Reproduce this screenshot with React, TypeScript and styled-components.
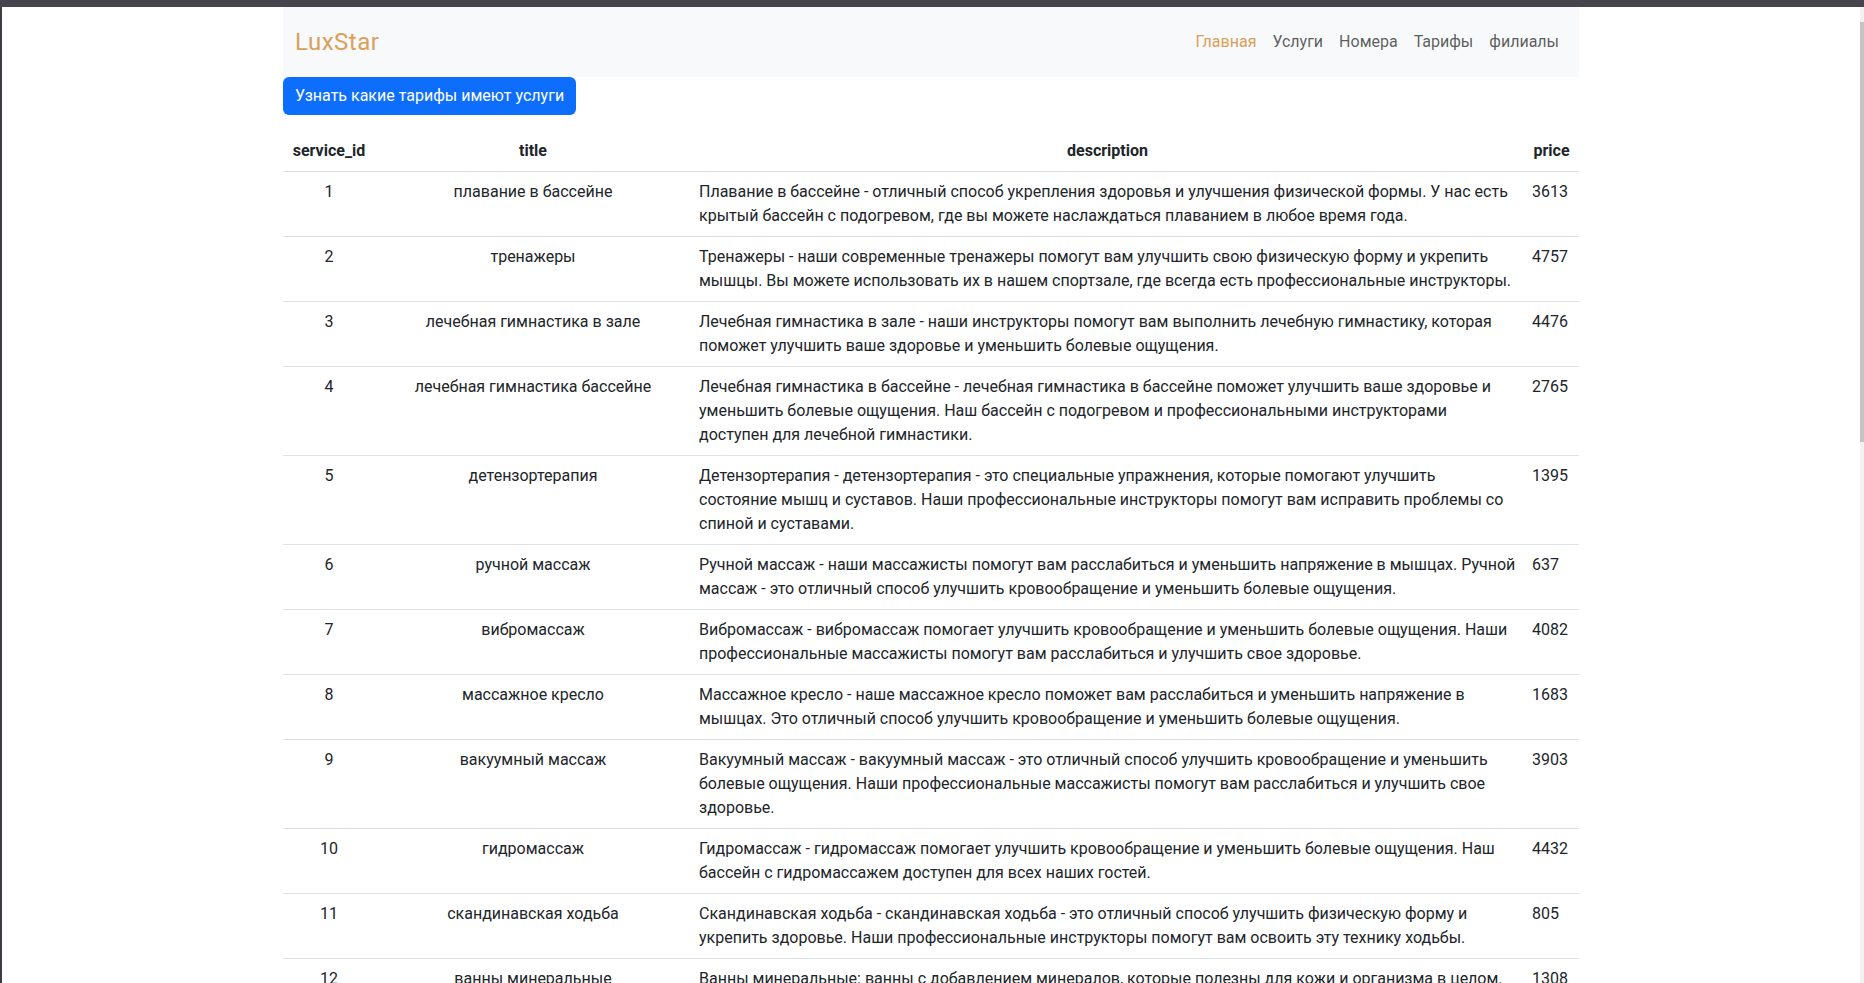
import React from 'react';
import styled, { createGlobalStyle } from 'styled-components';

type Service = {
  id: number;
  title: string;
  description: string;
  price: number;
};

const services: Service[] = [
  {
    id: 1,
    title: 'плавание в бассейне',
    description:
      'Плавание в бассейне - отличный способ укрепления здоровья и улучшения физической формы. У нас есть крытый бассейн с подогревом, где вы можете наслаждаться плаванием в любое время года.',
    price: 3613,
  },
  {
    id: 2,
    title: 'тренажеры',
    description:
      'Тренажеры - наши современные тренажеры помогут вам улучшить свою физическую форму и укрепить мышцы. Вы можете использовать их в нашем спортзале, где всегда есть профессиональные инструкторы.',
    price: 4757,
  },
  {
    id: 3,
    title: 'лечебная гимнастика в зале',
    description:
      'Лечебная гимнастика в зале - наши инструкторы помогут вам выполнить лечебную гимнастику, которая поможет улучшить ваше здоровье и уменьшить болевые ощущения.',
    price: 4476,
  },
  {
    id: 4,
    title: 'лечебная гимнастика бассейне',
    description:
      'Лечебная гимнастика в бассейне - лечебная гимнастика в бассейне поможет улучшить ваше здоровье и уменьшить болевые ощущения. Наш бассейн с подогревом и профессиональными инструкторами доступен для лечебной гимнастики.',
    price: 2765,
  },
  {
    id: 5,
    title: 'детензортерапия',
    description:
      'Детензортерапия - детензортерапия - это специальные упражнения, которые помогают улучшить состояние мышц и суставов. Наши профессиональные инструкторы помогут вам исправить проблемы со спиной и суставами.',
    price: 1395,
  },
  {
    id: 6,
    title: 'ручной массаж',
    description:
      'Ручной массаж - наши массажисты помогут вам расслабиться и уменьшить напряжение в мышцах. Ручной массаж - это отличный способ улучшить кровообращение и уменьшить болевые ощущения.',
    price: 637,
  },
  {
    id: 7,
    title: 'вибромассаж',
    description:
      'Вибромассаж - вибромассаж помогает улучшить кровообращение и уменьшить болевые ощущения. Наши профессиональные массажисты помогут вам расслабиться и улучшить свое здоровье.',
    price: 4082,
  },
  {
    id: 8,
    title: 'массажное кресло',
    description:
      'Массажное кресло - наше массажное кресло поможет вам расслабиться и уменьшить напряжение в мышцах. Это отличный способ улучшить кровообращение и уменьшить болевые ощущения.',
    price: 1683,
  },
  {
    id: 9,
    title: 'вакуумный массаж',
    description:
      'Вакуумный массаж - вакуумный массаж - это отличный способ улучшить кровообращение и уменьшить болевые ощущения. Наши профессиональные массажисты помогут вам расслабиться и улучшить свое здоровье.',
    price: 3903,
  },
  {
    id: 10,
    title: 'гидромассаж',
    description:
      'Гидромассаж - гидромассаж помогает улучшить кровообращение и уменьшить болевые ощущения. Наш бассейн с гидромассажем доступен для всех наших гостей.',
    price: 4432,
  },
  {
    id: 11,
    title: 'скандинавская ходьба',
    description:
      'Скандинавская ходьба - скандинавская ходьба - это отличный способ улучшить физическую форму и укрепить здоровье. Наши профессиональные инструкторы помогут вам освоить эту технику ходьбы.',
    price: 805,
  },
  {
    id: 12,
    title: 'ванны минеральные',
    description:
      'Ванны минеральные: ванны с добавлением минералов, которые полезны для кожи и организма в целом. Мы предлагаем разные виды минеральных ванн для вашего отдыха.',
    price: 1308,
  },
];

const navItems = ['Главная', 'Услуги', 'Номера', 'Тарифы', 'филиалы'];

const GlobalStyle = createGlobalStyle`
  html, body {
    margin: 0;
    padding: 0;
    height: 100%;
    overflow: hidden;
  }
  body {
    font-family: Roboto, "Noto Sans", sans-serif;
    font-size: 16px;
    line-height: 1.5;
    color: #212529;
    background: #fff;
  }
`;

const Frame = styled.div`
  display: flex;
  flex-direction: column;
  height: 100vh;
`;

const WindowBar = styled.div`
  height: 7px;
  flex-shrink: 0;
  background: #46454d;
`;

const WindowBody = styled.div`
  flex: 1;
  display: flex;
  min-height: 0;
`;

const LeftEdge = styled.div`
  width: 2px;
  background: #3f3e45;
`;

const Viewport = styled.div`
  flex: 1;
  overflow: hidden;
  background: #fff;
`;

const ScrollTrack = styled.div`
  width: 4px;
  padding-top: 15px;
  background: #f1f1f1;
`;

const ScrollThumb = styled.div`
  height: 420px;
  background: #c4c4c4;
`;

const Container = styled.div`
  width: 1296px;
  margin: 0 auto;
`;

const Navbar = styled.nav`
  display: flex;
  align-items: center;
  justify-content: space-between;
  height: 70px;
  padding: 0 12px;
  background: #f8f9fa;
`;

const Brand = styled.a`
  font-size: 24px;
  letter-spacing: 0.5px;
  color: #d9a05b;
  text-decoration: none;
`;

const NavList = styled.ul`
  display: flex;
  list-style: none;
  margin: 0;
  padding: 0;
`;

const NavLink = styled.a<{ $active?: boolean }>`
  display: block;
  padding: 0 8px;
  color: ${(p) => (p.$active ? '#d9a05b' : 'rgba(0, 0, 0, 0.65)')};
  text-decoration: none;
`;

const PrimaryButton = styled.button`
  display: block;
  height: 38px;
  padding: 6px 12px;
  border: 0;
  border-radius: 6px;
  background: #0d6efd;
  color: #fff;
  font: inherit;
  cursor: pointer;
`;

const Table = styled.table`
  width: 100%;
  margin-top: 16px;
  border-collapse: collapse;
  table-layout: fixed;
`;

const Th = styled.th`
  padding: 8px;
  font-weight: 700;
  text-align: center;
  vertical-align: bottom;
  border-bottom: 1px solid #dee2e6;
`;

const Td = styled.td<{ $align?: 'left' | 'center' }>`
  padding: 8px;
  vertical-align: top;
  text-align: ${(p) => p.$align ?? 'left'};
  border-bottom: 1px solid #dee2e6;
`;

export default function App() {
  return (
    <Frame>
      <GlobalStyle />
      <WindowBar />
      <WindowBody>
        <LeftEdge />
        <Viewport>
          <Container>
            <Navbar>
              <Brand href="#">LuxStar</Brand>
              <NavList>
                {navItems.map((item, i) => (
                  <li key={item}>
                    <NavLink href="#" $active={i === 0}>
                      {item}
                    </NavLink>
                  </li>
                ))}
              </NavList>
            </Navbar>
            <PrimaryButton>Узнать какие тарифы имеют услуги</PrimaryButton>
            <Table>
              <colgroup>
                <col style={{ width: 92 }} />
                <col style={{ width: 316 }} />
                <col style={{ width: 833 }} />
                <col style={{ width: 55 }} />
              </colgroup>
              <thead>
                <tr>
                  <Th>service_id</Th>
                  <Th>title</Th>
                  <Th>description</Th>
                  <Th>price</Th>
                </tr>
              </thead>
              <tbody>
                {services.map((s) => (
                  <tr key={s.id}>
                    <Td $align="center">{s.id}</Td>
                    <Td $align="center">{s.title}</Td>
                    <Td>{s.description}</Td>
                    <Td>{s.price}</Td>
                  </tr>
                ))}
              </tbody>
            </Table>
          </Container>
        </Viewport>
        <ScrollTrack>
          <ScrollThumb />
        </ScrollTrack>
      </WindowBody>
    </Frame>
  );
}
